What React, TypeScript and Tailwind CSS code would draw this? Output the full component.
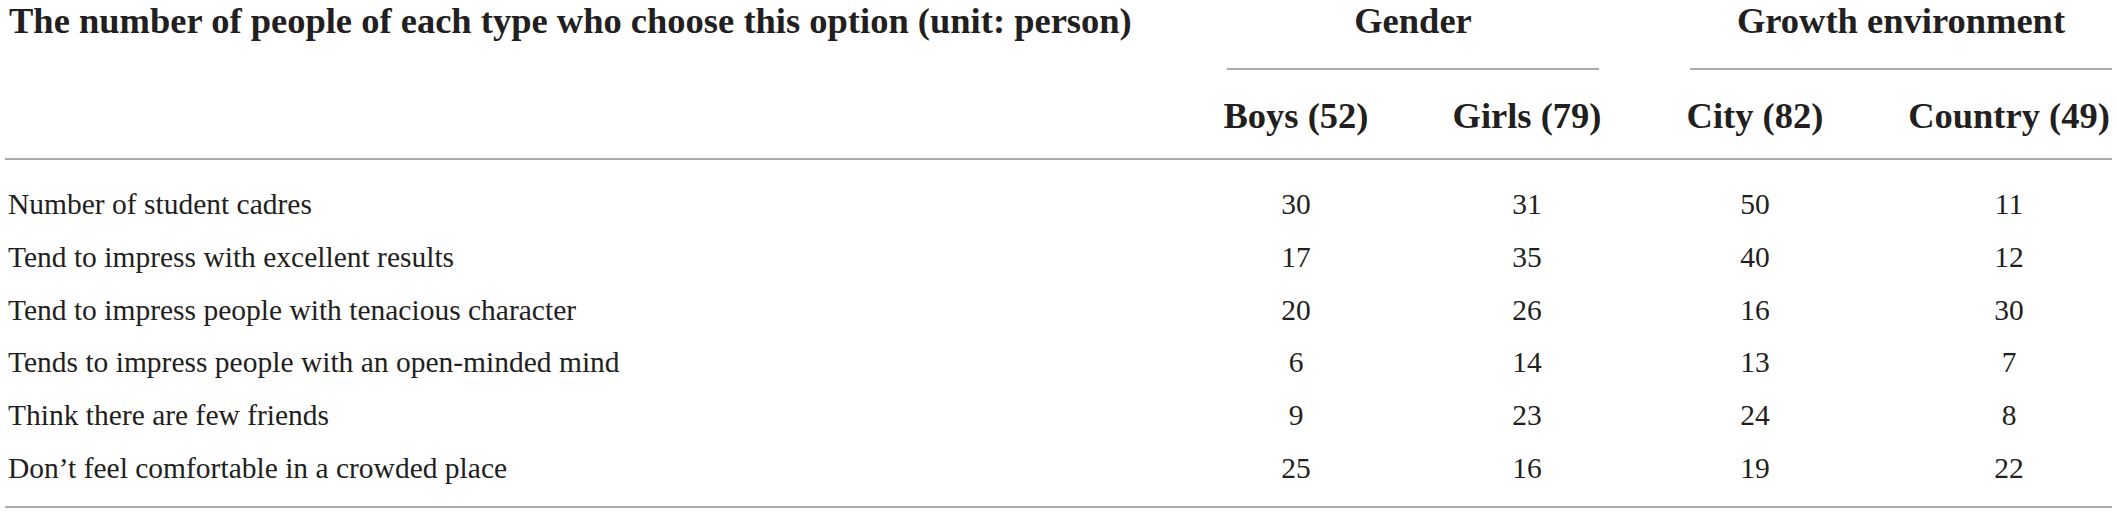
const rows = [
  { label: 'Number of student cadres', v: [30, 31, 50, 11] },
  { label: 'Tend to impress with excellent results', v: [17, 35, 40, 12] },
  { label: 'Tend to impress people with tenacious character', v: [20, 26, 16, 30] },
  { label: 'Tends to impress people with an open-minded mind', v: [6, 14, 13, 7] },
  { label: 'Think there are few friends', v: [9, 23, 24, 8] },
  { label: 'Don\u2019t feel comfortable in a crowded place', v: [25, 16, 19, 22] },
]

// per-column padding so each value sits under its header
const cellPad = ['pr-[40px]', 'pl-[2px]', 'pr-[13px]', 'pl-[24px]']

export default function App() {
  return (
    <div className="min-h-screen bg-white px-[5px] text-[#231f20] font-['Liberation_Serif',serif]">
      <div className="w-[2107px]">
        <div className="grid grid-cols-[1216px_190px_230px_241px_230px] border-b-2 border-[#a9a9a9] text-[36.5px] font-bold leading-[42px]">
          <div className="row-span-2 whitespace-nowrap pl-[4px]">
            The number of people of each type who choose this option (unit: person)
          </div>
          <div className="col-span-2">
            <div className="ml-[6px] w-[372px] border-b-2 border-[#a9a9a9] pb-[26px] text-center">Gender</div>
          </div>
          <div className="col-span-2">
            <div className="ml-[49px] w-[422px] border-b-2 border-[#a9a9a9] pb-[26px] text-center whitespace-nowrap">
              Growth environment
            </div>
          </div>
          {['Boys (52)', 'Girls (79)', 'City (82)', 'Country (49)'].map((h, i) => (
            <div key={h} className={`whitespace-nowrap pt-[25px] pb-[21px] text-center ${cellPad[i]}`}>
              {h}
            </div>
          ))}
        </div>

        <div className="border-b-2 border-[#a9a9a9] pt-[18px] pb-[11px] text-[29.5px] leading-[52.8px]">
          {rows.map(r => (
            <div key={r.label} className="grid h-[52.8px] grid-cols-[1216px_190px_230px_241px_230px]">
              <div className="whitespace-nowrap pl-[3px]">{r.label}</div>
              {r.v.map((n, i) => (
                <div key={i} className={`text-center ${cellPad[i]}`}>
                  {n}
                </div>
              ))}
            </div>
          ))}
        </div>
      </div>
    </div>
  )
}
